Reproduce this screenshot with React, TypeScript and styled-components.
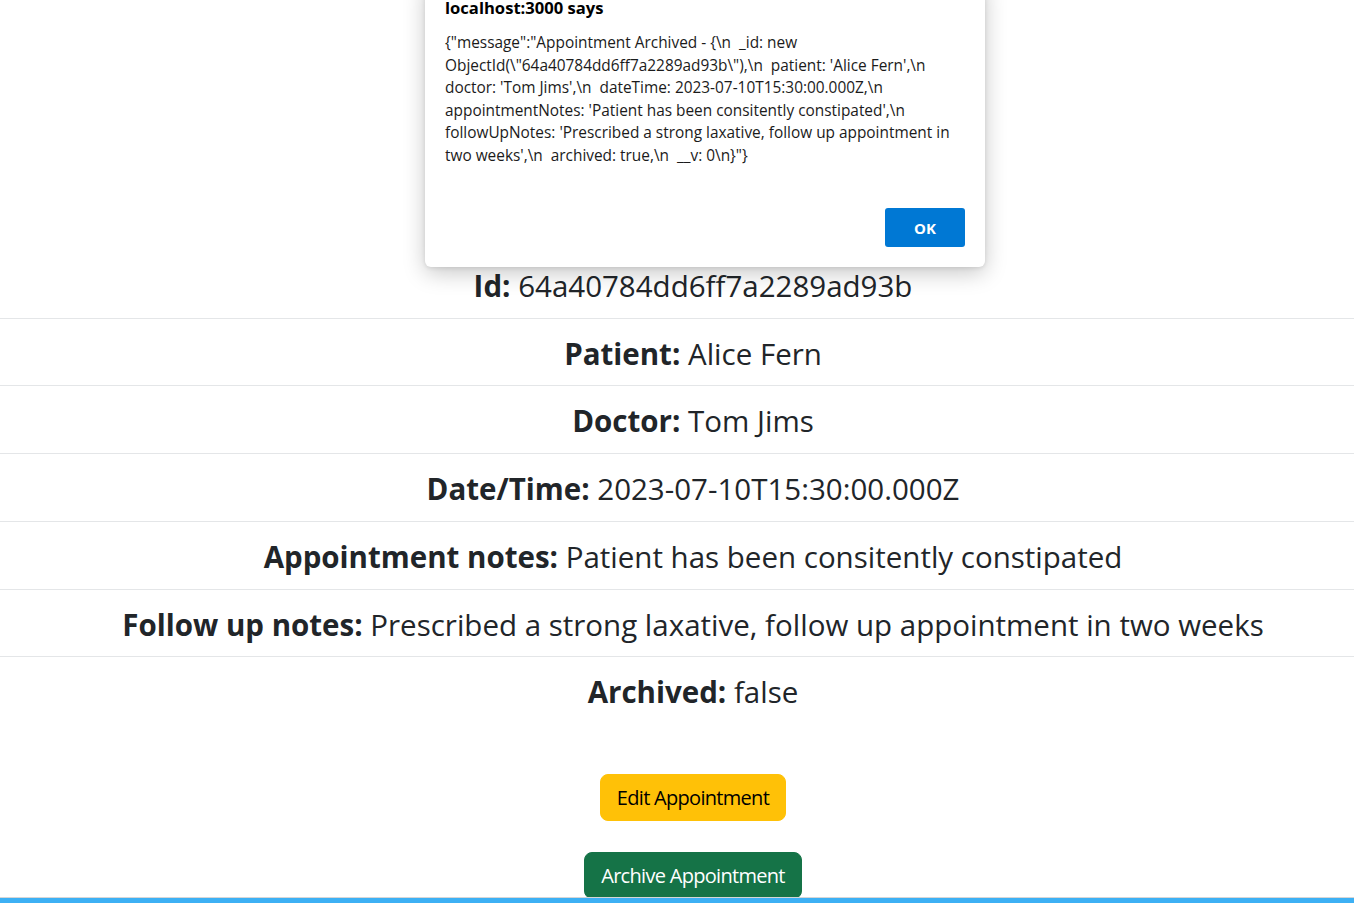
import React from "react";
import styled, { createGlobalStyle } from "styled-components";

const Global = createGlobalStyle`
  html, body { margin: 0; padding: 0; background: #fff; }
  body {
    font-family: "Open Sans", "Noto Sans", "Liberation Sans", sans-serif;
    color: #212529;
    height: 903px;
    overflow: hidden;
  }
`;

const Page = styled.div`
  position: relative;
  height: 903px;
  display: flex;
  flex-direction: column;
`;

const Content = styled.main`
  flex: 1;
  min-height: 0;
  overflow: hidden;
  padding-top: 251px;
  display: flex;
  flex-direction: column;
  align-items: stretch;
`;

const List = styled.ul`
  list-style: none;
  margin: 0;
  padding: 0;
`;

const Item = styled.li<{ $last?: boolean }>`
  padding: 18px 16px 6px 48px;
  border-bottom: ${(p) => (p.$last ? "none" : "1px solid #e4e6e8")};
  text-align: center;
`;

const Field = styled.h3`
  margin: 0 0 8px;
  font-size: 29.5px;
  line-height: 34.7px;
  font-weight: 400;
  white-space: nowrap;
`;

const Label = styled.strong`
  font-weight: 700;
`;

const Actions = styled.div`
  display: flex;
  flex-direction: column;
  align-items: center;
  gap: 31px;
  margin-top: 50px;
  padding-left: 32px;
`;

const Button = styled.button<{ $variant: "warning" | "success" }>`
  font-family: inherit;
  font-size: 20px;
  line-height: 29px;
  padding: 8px 16px;
  border-radius: 8px;
  letter-spacing: -0.7px;
  border: 1px solid ${(p) => (p.$variant === "warning" ? "#ffc107" : "#157347")};
  background: ${(p) => (p.$variant === "warning" ? "#ffc107" : "#157347")};
  color: ${(p) => (p.$variant === "warning" ? "#000" : "#fff")};
  cursor: pointer;
`;

const BottomBar = styled.div`
  flex: none;
  height: 5px;
  background: #3db0f4;
  border-top: 1px solid #d6d6d6;
`;

const Dialog = styled.div`
  position: absolute;
  top: -20px;
  left: 425px;
  width: 560px;
  height: 287px;
  box-sizing: border-box;
  background: #fff;
  border-radius: 6px;
  box-shadow: 0 6px 22px rgba(0, 0, 0, 0.22), 0 1px 4px rgba(0, 0, 0, 0.1);
  padding: 18px 20px 20px;
  display: flex;
  flex-direction: column;
`;

const DialogTitle = styled.div`
  font-size: 16.6px;
  line-height: 20px;
  font-weight: 700;
  color: #000;
`;

const DialogMessage = styled.div`
  margin-top: 14px;
  font-size: 15.4px;
  line-height: 22.5px;
  color: #1b1b1b;
  white-space: pre-wrap;
  word-break: break-word;
`;

const DialogFooter = styled.div`
  margin-top: auto;
  display: flex;
  justify-content: flex-end;
`;

const OkButton = styled.button`
  width: 80px;
  height: 39px;
  border: none;
  border-radius: 3px;
  background: #0078d4;
  color: #fff;
  font-family: inherit;
  font-weight: 700;
  font-size: 15px;
`;

const fields: [string, string][] = [
  ["Id:", "64a40784dd6ff7a2289ad93b"],
  ["Patient:", "Alice Fern"],
  ["Doctor:", "Tom Jims"],
  ["Date/Time:", "2023-07-10T15:30:00.000Z"],
  ["Appointment notes:", "Patient has been consitently constipated"],
  ["Follow up notes:", "Prescribed a strong laxative, follow up appointment in two weeks"],
  ["Archived:", "false"],
];

const message =
  "{\"message\":\"Appointment Archived - {\\n  _id: new ObjectId(\\\"64a40784dd6ff7a2289ad93b\\\"),\\n  patient: 'Alice Fern',\\n  doctor: 'Tom Jims',\\n  dateTime: 2023-07-10T15:30:00.000Z,\\n  appointmentNotes: 'Patient has been consitently constipated',\\n  followUpNotes: 'Prescribed a strong laxative, follow up appointment in two weeks',\\n  archived: true,\\n  __v: 0\\n}\"}";

export default function App() {
  return (
    <Page>
      <Global />
      <Content>
        <List>
          {fields.map(([label, value], i) => (
            <Item key={label} $last={i === fields.length - 1}>
              <Field>
                <Label>{label}</Label> {value}
              </Field>
            </Item>
          ))}
        </List>
        <Actions>
          <Button $variant="warning">Edit Appointment</Button>
          <Button $variant="success">Archive Appointment</Button>
        </Actions>
      </Content>
      <BottomBar />
      <Dialog>
        <DialogTitle>localhost:3000 says</DialogTitle>
        <DialogMessage>{message}</DialogMessage>
        <DialogFooter>
          <OkButton>OK</OkButton>
        </DialogFooter>
      </Dialog>
    </Page>
  );
}
